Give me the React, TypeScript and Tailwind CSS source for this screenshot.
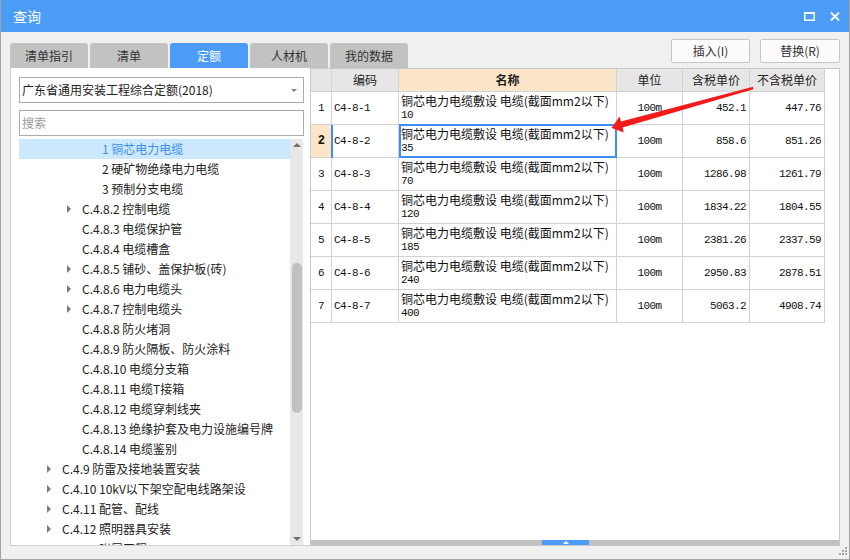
import React from "react";

type TreeItem = { label: string; level: 1 | 2 | 3; arrow?: boolean; selected?: boolean };

const tree: TreeItem[] = [
  { label: "1 铜芯电力电缆", level: 3, selected: true },
  { label: "2 硬矿物绝缘电力电缆", level: 3 },
  { label: "3 预制分支电缆", level: 3 },
  { label: "C.4.8.2 控制电缆", level: 2, arrow: true },
  { label: "C.4.8.3 电缆保护管", level: 2 },
  { label: "C.4.8.4 电缆槽盒", level: 2 },
  { label: "C.4.8.5 铺砂、盖保护板(砖)", level: 2, arrow: true },
  { label: "C.4.8.6 电力电缆头", level: 2, arrow: true },
  { label: "C.4.8.7 控制电缆头", level: 2, arrow: true },
  { label: "C.4.8.8 防火堵洞", level: 2 },
  { label: "C.4.8.9 防火隔板、防火涂料", level: 2 },
  { label: "C.4.8.10 电缆分支箱", level: 2 },
  { label: "C.4.8.11 电缆T接箱", level: 2 },
  { label: "C.4.8.12 电缆穿刺线夹", level: 2 },
  { label: "C.4.8.13 绝缘护套及电力设施编号牌", level: 2 },
  { label: "C.4.8.14 电缆鉴别", level: 2 },
  { label: "C.4.9 防雷及接地装置安装", level: 1, arrow: true },
  { label: "C.4.10 10kV以下架空配电线路架设", level: 1, arrow: true },
  { label: "C.4.11 配管、配线", level: 1, arrow: true },
  { label: "C.4.12 照明器具安装", level: 1, arrow: true },
  { label: "C.4.13 附属工程", level: 1, arrow: true },
];

const levelPad: Record<number, string> = {
  1: "pl-[28px]",
  2: "pl-[48px]",
  3: "pl-[68px]",
};

const rows = [
  ["1", "C4-8-1", "10", "100m", "452.1", "447.76"],
  ["2", "C4-8-2", "35", "100m", "858.6", "851.26"],
  ["3", "C4-8-3", "70", "100m", "1286.98", "1261.79"],
  ["4", "C4-8-4", "120", "100m", "1834.22", "1804.55"],
  ["5", "C4-8-5", "185", "100m", "2381.26", "2337.59"],
  ["6", "C4-8-6", "240", "100m", "2950.83", "2878.51"],
  ["7", "C4-8-7", "400", "100m", "5063.2", "4908.74"],
];

const tabs = ["清单指引", "清单", "定额", "人材机", "我的数据"];

const cellB = "border-r border-b border-[#d2d2d2] box-border";
const mono = "font-['Liberation_Mono','Noto_Sans_CJK_SC',monospace] text-[11px] tracking-[-0.6px] text-[#111]";

export default function App() {
  return (
    <div className="relative w-[850px] h-[560px] bg-[#f0f0f0] border-x border-b border-[#a3a3a3] flex flex-col overflow-hidden font-['Noto_Sans_CJK_SC','Noto_Sans',sans-serif] text-[#333]">
      {/* Title bar */}
      <div className="h-[32px] bg-[#4a9cf7] flex items-center pl-[12px] text-white text-[14px] shrink-0">
        <span>查询</span>
        <div className="ml-auto flex items-center gap-[15px] mr-[9px]">
          <svg width="11" height="9" viewBox="0 0 11 9">
            <rect x="0.75" y="1" width="9.5" height="7.25" fill="none" stroke="white" strokeWidth="1.5" />
            <rect x="0" y="0" width="11" height="2" fill="white" />
          </svg>
          <svg width="10" height="9" viewBox="0 0 10 9">
            <path d="M1 0.5 L9 8.5 M9 0.5 L1 8.5" stroke="white" strokeWidth="1.8" />
          </svg>
        </div>
      </div>

      {/* Tabs + buttons */}
      <div className="h-[36px] flex shrink-0">
        <div className="ml-[9px] mt-[11px] flex gap-[2px]">
          {tabs.map((t, i) => (
            <div
              key={t}
              className={
                i === 2
                  ? "w-[78px] h-[25px] rounded-t-[3px] bg-[#4a9cf7] text-white text-[12px] flex items-center justify-center"
                  : "w-[78px] h-[25px] rounded-t-[3px] bg-[#c2c2c2] text-[#333] text-[12px] flex items-center justify-center"
              }
            >
              {t}
            </div>
          ))}
        </div>
        <div className="ml-auto mt-[7px] mr-[9px] flex gap-[10px]">
          <div className="w-[79px] h-[24px] border border-[#c6c6c6] rounded-[2px] bg-[#fbfbfb] text-[12px] text-[#333] flex items-center justify-center">
            插入(I)
          </div>
          <div className="w-[80px] h-[24px] border border-[#c6c6c6] rounded-[2px] bg-[#fbfbfb] text-[12px] text-[#333] flex items-center justify-center">
            替换(R)
          </div>
        </div>
      </div>

      {/* Content */}
      <div className="h-[478px] flex pl-[9px] shrink-0">
        {/* Left panel */}
        <div className="w-[300px] h-full bg-white border-l border-b border-[#d0d0d0] pl-[8px] pt-[9px] flex flex-col">
          <div className="w-[285px] h-[26px] border border-[#ababab] flex items-center pl-[2px] pr-[6px] text-[12px] text-[#222]">
            <span>广东省通用安装工程综合定额(2018)</span>
            <div className="ml-auto w-0 h-0 border-x-[3px] border-x-transparent border-t-[3px] border-t-[#808080]" />
          </div>
          <div className="w-[285px] h-[26px] mt-[7px] border border-[#ababab] flex items-center pl-[2px] text-[12px] text-[#9a9a9a]">
            搜索
          </div>
          <div className="mt-[3px] flex flex-1 min-h-0">
            <div className="w-[271px] overflow-hidden">
              {tree.map((it) => (
                <div
                  key={it.label}
                  className={
                    "h-[20px] flex items-center text-[12px] " +
                    levelPad[it.level] +
                    (it.selected ? " bg-[#cce8ff] text-[#3a8ee6]" : " text-[#222]")
                  }
                >
                  <div className="w-[15px] shrink-0 flex items-center">
                    {it.arrow && (
                      <div className="w-0 h-0 border-y-[4px] border-y-transparent border-l-[4px] border-l-[#7c7c7c]" />
                    )}
                  </div>
                  <span className="whitespace-nowrap leading-[20px]">{it.label}</span>
                </div>
              ))}
            </div>
            <div className="w-[13px] bg-[#e8e8e8] relative">
              <div className="absolute top-[4px] left-[3px] w-0 h-0 border-x-[4px] border-x-transparent border-b-[4px] border-b-[#6f6f6f]" />
              <div className="absolute top-[124px] left-[2px] w-[10px] h-[150px] rounded-[5px] bg-[#c1c1c1]" />
              <div className="absolute bottom-[4px] left-[3px] w-0 h-0 border-x-[4px] border-x-transparent border-t-[4px] border-t-[#6f6f6f]" />
            </div>
          </div>
        </div>

        {/* Right panel */}
        <div className="w-[530px] h-full bg-white border border-[#c8c8c8] flex flex-col">
          <div className="flex flex-col">
            {/* Header */}
            <div className="flex h-[23px] text-[12px] text-[#222]">
              <div className={"w-[21px] bg-[#e6e6e6] " + cellB} />
              <div className={"w-[67px] bg-[#e6e6e6] flex items-center justify-center " + cellB}>编码</div>
              <div className={"w-[218px] bg-[#fde6c8] flex items-center justify-center font-bold " + cellB}>名称</div>
              <div className={"w-[66px] bg-[#e6e6e6] flex items-center justify-center " + cellB}>单位</div>
              <div className={"w-[67px] bg-[#e6e6e6] flex items-center justify-center " + cellB}>含税单价</div>
              <div className={"w-[75px] bg-[#e6e6e6] flex items-center justify-center " + cellB}>不含税单价</div>
            </div>
            {rows.map((r) => {
              const sel = r[0] === "2";
              return (
                <div key={r[0]} className="flex h-[33px]">
                  <div
                    className={
                      "w-[21px] flex items-center justify-center " +
                      mono +
                      (sel ? " bg-[#fde6c8] font-bold text-[12px]" : "") +
                      " " +
                      cellB
                    }
                  >
                    {r[0]}
                  </div>
                  <div className={"relative w-[67px] flex items-center pl-[2px] " + mono + " " + cellB}>
                    {sel && <div className="absolute left-[-1px] top-0 bottom-[-1px] w-[2px] bg-[#3d8ef0]" />}
                    {r[1]}
                  </div>
                  <div className={"relative w-[218px] pl-[2px] pt-[2px] " + cellB}>
                    {sel && (
                      <div className="absolute left-0 top-[-1px] right-[-1px] bottom-[-1px] border-2 border-[#3d8ef0]" />
                    )}
                    <div className="text-[12px] leading-[14px] text-[#111] whitespace-nowrap font-['Noto_Sans_CJK_SC',sans-serif]">
                      铜芯电力电缆敷设 电缆(截面mm2以下)
                    </div>
                    <div className={"leading-[14px] " + mono}>{r[2]}</div>
                  </div>
                  <div className={"w-[66px] flex items-center justify-center " + mono + " " + cellB}>{r[3]}</div>
                  <div className={"w-[67px] flex items-center justify-end pr-[3px] " + mono + " " + cellB}>{r[4]}</div>
                  <div className={"w-[75px] flex items-center justify-end pr-[3px] " + mono + " " + cellB}>{r[5]}</div>
                </div>
              );
            })}
          </div>
          <div className="flex-1" />
          <div className="h-[5px] bg-[#c0c0c0] relative">
            <div className="absolute left-[231px] top-0 w-[47px] h-[5px] bg-[#4a9cf7] flex items-center justify-center">
              <div className="w-0 h-0 border-x-[3px] border-x-transparent border-b-[3px] border-b-white" />
            </div>
          </div>
        </div>
      </div>

      {/* bottom strip */}
      <div className="flex-1 relative">
        <svg className="absolute right-[1px] bottom-[3px]" width="9" height="9" viewBox="0 0 9 9">
          <rect x="6" y="0" width="2" height="2" fill="#a6a6a6" />
          <rect x="3" y="3" width="2" height="2" fill="#a6a6a6" />
          <rect x="6" y="3" width="2" height="2" fill="#a6a6a6" />
          <rect x="0" y="6" width="2" height="2" fill="#a6a6a6" />
          <rect x="3" y="6" width="2" height="2" fill="#a6a6a6" />
          <rect x="6" y="6" width="2" height="2" fill="#a6a6a6" />
        </svg>
      </div>

      {/* Red arrow annotation */}
      <svg className="absolute left-[-1px] top-0 pointer-events-none" width="850" height="560" viewBox="0 0 850 560">
        <polygon
          points="753,86.8 621,121.5 619.6,116.5 611.5,128 623.8,132.5 622.6,127.5 753.4,89.2"
          fill="#f21b1b"
        />
      </svg>
    </div>
  );
}
